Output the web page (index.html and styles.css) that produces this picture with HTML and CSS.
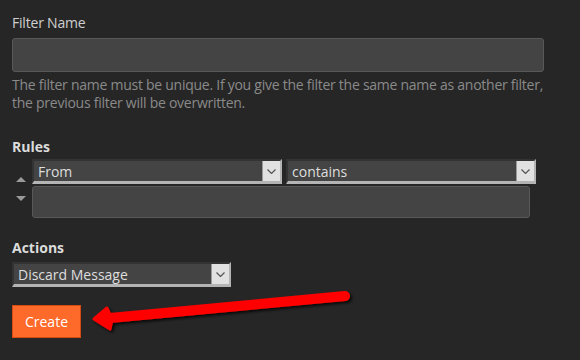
FILE: index.html
```html
<!DOCTYPE html>
<html>
  <head>
    <title>New Filter</title>
    <link rel="stylesheet" href="styles.css">
  </head>
  <body>
    <form class="filter-form">
      <label class="field-label">Filter Name</label>
      <div class="text-input"></div>
      <p class="help">
        The filter name must be unique. If you give the filter the same name as another filter,<br>
        the previous filter will be overwritten.
      </p>

      <h4 class="section-title rules-title">Rules</h4>
      <div class="rule">
        <div class="order">
          <span class="tri up"></span>
          <span class="tri down"></span>
        </div>
        <div class="rule-body">
          <div class="rule-selects">
            <div class="select wide">
              <span class="select-text">From</span>
              <span class="select-btn"><svg width="9" height="5" viewBox="0 0 9 5"><path d="M0.5 0.5 L4.5 4.5 L8.5 0.5" fill="none" stroke="#555" stroke-width="1.2"/></svg></span>
            </div>
            <div class="select wide">
              <span class="select-text">contains</span>
              <span class="select-btn"><svg width="9" height="5" viewBox="0 0 9 5"><path d="M0.5 0.5 L4.5 4.5 L8.5 0.5" fill="none" stroke="#555" stroke-width="1.2"/></svg></span>
            </div>
          </div>
          <div class="text-input rule-value"></div>
        </div>
      </div>

      <h4 class="section-title actions-title">Actions</h4>
      <div class="select action">
        <span class="select-text">Discard Message</span>
        <span class="select-btn"><svg width="9" height="5" viewBox="0 0 9 5"><path d="M0.5 0.5 L4.5 4.5 L8.5 0.5" fill="none" stroke="#555" stroke-width="1.2"/></svg></span>
      </div>

      <button type="button" class="create">Create</button>
    </form>

    <svg class="pointer" width="580" height="360" viewBox="0 0 580 360">
      <defs>
        <filter id="shadow" x="-10%" y="-50%" width="120%" height="200%">
          <feDropShadow dx="2" dy="2" stdDeviation="1.5" flood-color="#000" flood-opacity="0.8"/>
        </filter>
      </defs>
      <g filter="url(#shadow)" fill="#ff0000" stroke="#ff0000" stroke-linejoin="round" stroke-linecap="round">
        <path d="M345 296 L110 318" stroke-width="10" fill="none"/>
        <path d="M94 319 L107 308 L112 319 L110 329 Z" stroke-width="3"/>
      </g>
    </svg>
  </body>
</html>
```

FILE: styles.css
```css
body {
  margin: 0;
  background: #262626;
  font-family: "Open Sans", "DejaVu Sans", sans-serif;
  font-size: 14px;
  color: #d4d4d4;
  position: relative;
  height: 360px;
  overflow: hidden;
}

.filter-form {
  padding: 13px 12px 0;
  width: 532px;
}

.field-label {
  display: block;
  line-height: 20px;
  color: #cfcfcf;
  letter-spacing: -0.2px;
}

.text-input {
  margin-top: 5px;
  height: 32px;
  background: #444;
  border: 1px solid #585858;
  border-radius: 3px;
}

.help {
  margin: 4px 0 0;
  width: 560px;
  white-space: nowrap;
  line-height: 18px;
  color: #8a8a8a;
  letter-spacing: -0.26px;
}

.section-title {
  margin: 0;
  font-size: 14px;
  font-weight: bold;
  line-height: 20px;
  color: #dcdcdc;
}

.rules-title {
  margin-top: 25px;
}

.actions-title {
  margin-top: 20px;
}

.rule {
  display: flex;
  margin-top: 2px;
}

.order {
  width: 20px;
  display: flex;
  flex-direction: column;
  align-items: center;
  padding-top: 18px;
  gap: 14px;
  margin-left: -1px;
}

.tri {
  width: 0;
  height: 0;
  border-left: 5px solid transparent;
  border-right: 5px solid transparent;
}

.tri.up {
  border-bottom: 5px solid #9a9a9a;
}

.tri.down {
  border-top: 5px solid #9a9a9a;
}

.rule-body {
  margin-left: 1px;
}

.rule-selects {
  display: flex;
  gap: 4px;
}

.select {
  display: flex;
  align-items: stretch;
  box-sizing: border-box;
  height: 25px;
  background: #444;
  border-top: 2px solid #333;
  border-left: 2px solid #333;
  border-right: 2px solid #b4b4b4;
  border-bottom: 3px solid #b4b4b4;
}

.select.wide {
  width: 250px;
}

.select.action {
  margin-top: 4px;
  width: 219px;
}

.select-text {
  flex: 1;
  padding-left: 4px;
  line-height: 22px;
  color: #dedede;
}

.select-btn {
  width: 17px;
  background: #e1e1e1;
  border-left: 1px solid #999;
  display: flex;
  align-items: center;
  justify-content: center;
}

.rule-value {
  margin-top: 2px;
  width: 496px;
  height: 30px;
}

.create {
  display: block;
  margin-top: 18px;
  width: 69px;
  height: 33px;
  background: #fe6a2a;
  border: 1px solid #d44b14;
  color: #fff;
  font-family: "Open Sans", "DejaVu Sans", sans-serif;
  font-size: 14px;
  padding: 0;
}

.pointer {
  position: absolute;
  top: 0;
  left: 0;
  pointer-events: none;
}
```
